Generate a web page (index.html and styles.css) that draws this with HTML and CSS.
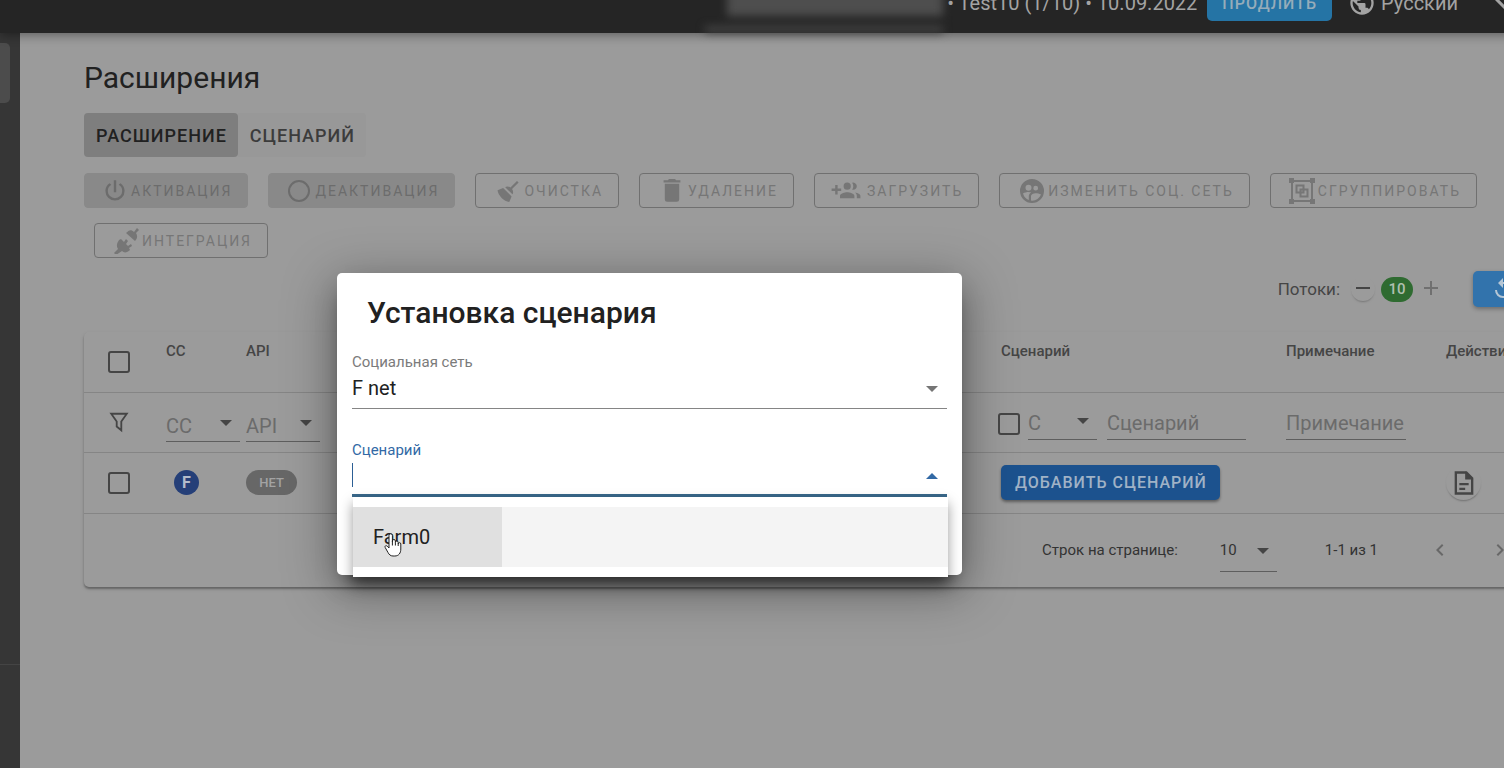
FILE: index.html
```html
<!DOCTYPE html>
<html lang="ru">

<head>
    <meta charset="utf-8">
    <title>Расширения</title>
    <link rel="stylesheet" href="styles.css">
</head>

<body>
    <header class="topbar">
        <div class="hidden-mail"></div>
        <span>• Test10 (1/10) • 10.09.2022</span>
        <button class="renew">ПРОДЛИТЬ</button>
        <svg class="globe" viewBox="0 0 24 24"><path d="M17.9 17.39c-.26-.8-1.01-1.39-1.9-1.39h-1v-3a1 1 0 0 0-1-1H8v-2h2a1 1 0 0 0 1-1V7h2a2 2 0 0 0 2-2v-.41c2.93 1.18 5 4.05 5 7.41 0 2.08-.8 3.97-2.1 5.39M11 19.93C7.05 19.44 4 16.08 4 12c0-.62.08-1.21.21-1.79L9 15v1a2 2 0 0 0 2 2m1-16A10 10 0 0 0 2 12a10 10 0 0 0 10 10 10 10 0 0 0 10-10A10 10 0 0 0 12 2z"/></svg>
        <span class="lang">Русский</span>
        <svg class="chevron" viewBox="0 0 24 24"><path d="M7.41 8.58 12 13.17l4.59-4.59L18 10l-6 6-6-6z"/></svg>
    </header>

    <div class="layout">
        <nav class="sidebar">
            <a href="#" class="active" aria-label="Расширения"></a>
            <div class="side-line"></div>
        </nav>

        <main>
            <h1>Расширения</h1>

            <div class="tabs">
                <button class="selected">РАСШИРЕНИЕ</button>
                <button>СЦЕНАРИЙ</button>
            </div>

            <div class="toolbar">
                <button class="tool filled" disabled>
                    <svg viewBox="2 2 20 20"><path d="m16.56 5.44-1.45 1.45A5.97 5.97 0 0 1 18 12a6 6 0 0 1-12 0c0-2.17 1.16-4.06 2.88-5.12L7.44 5.44A7.96 7.96 0 0 0 4 12a8 8 0 0 0 16 0c0-2.72-1.36-5.12-3.44-6.56M13 3h-2v10h2"/></svg>
                    АКТИВАЦИЯ
                </button>
                <button class="tool filled" disabled>
                    <svg viewBox="0 0 24 24"><circle cx="12" cy="12" r="10" class="stroke"/></svg>
                    ДЕАКТИВАЦИЯ
                </button>
                <button class="tool" disabled>
                    <svg viewBox="1 1 21 21"><path d="m19.36 2.72 1.42 1.42-5.72 5.71c1.07 1.54 1.22 3.39.32 4.59L9.06 8.12c1.2-.9 3.05-.75 4.59.32zM5.93 17.57c-2.01-2.01-3.24-4.41-3.58-6.65l4.88-2.09 7.44 7.44-2.09 4.88c-2.24-.34-4.64-1.57-6.65-3.58"/></svg>
                    ОЧИСТКА
                </button>
                <button class="tool" disabled>
                    <svg viewBox="2 2 20 20"><path d="M19 3h-3.5l-1-1h-5l-1 1H5v2h14M6 19a2 2 0 0 0 2 2h8a2 2 0 0 0 2-2V6H6z"/></svg>
                    УДАЛЕНИЕ
                </button>
                <button class="tool" disabled>
                    <svg class="wide" viewBox="0 0 24 20"><path d="M8 8H5V5H3v3H0v2h3v3h2v-3h3zm10 1a3 3 0 1 0-.9-5.86 5 5 0 0 1 0 5.72q.42.14.9.14m-5 0a3 3 0 1 0-3-3 3 3 0 0 0 3 3m6.6 2.2c.8.7 1.4 1.6 1.4 2.8v2h3v-2c0-1.5-2.4-2.5-4.4-2.8M13 11c-2 0-6 1-6 3v2h12v-2c0-2-4-3-6-3"/></svg>
                    ЗАГРУЗИТЬ
                </button>
                <button class="tool" disabled>
                    <svg viewBox="0 0 24 24"><path fill-rule="evenodd" d="M12 0a12 12 0 1 0 0 24 12 12 0 0 0 0-24M8.5 5.7a3 3 0 1 1 0 6 3 3 0 0 1 0-6m7.2 1.1a2.4 2.4 0 1 1 0 4.8 2.4 2.4 0 0 1 0-4.8M3 14.600c1.500-1 3.700-1.500 5.500-1.500.9 0 1.900.2 2.800.5-2 1.100-2.500 2.400-2.500 3.500v4a10 10 0 0 1-5.800-6.500m8 7v-4.500c0-1.800 2.400-2.900 4.700-2.900 1.500 0 3.900.5 5.300 1.400a10 10 0 0 1-10 6"/></svg>
                    ИЗМЕНИТЬ СОЦ. СЕТЬ
                </button>
                <button class="tool group" disabled>
                    <svg viewBox="0 0 26 26"><path class="stroke" d="M3 3h20v20H3zM7.500 7.500h7v7h-7zM11.500 11.500h7v7h-7z"/><path d="M0 0h5v5H0zM21 0h5v5h-5zM0 21h5v5H0zM21 21h5v5h-5z"/></svg>
                    СГРУППИРОВАТЬ
                </button>
                <button class="tool plug" disabled>
                    <svg viewBox="0 0 26 26"><path d="m21 4 3-4 2 2-3 3c2 3 1 6-1 8l-9-8c3-3 5-4 8-1M6 12l2-1 3 3 2-3 2 2-2 3 2 2 3-2 1 2-3 2 1 2c-3 3-6 3-8 1l-6 4-2-2 4-4c-2-3-1-6 1-9"/></svg>
                    ИНТЕГРАЦИЯ
                </button>
            </div>

            <div class="threads">
                <span class="threads-label">Потоки:</span>
                <button class="round" aria-label="Меньше"><svg viewBox="0 0 24 24"><path d="M19 12H5v-2h14z"/></svg></button>
                <span class="count">10</span>
                <button class="round plus" aria-label="Больше"><svg viewBox="0 0 24 24"><path d="M19 12h-6v6h-2v-6H5v-2h6V4h2v6h6z"/></svg></button>
                <button class="refresh" aria-label="Обновить"><svg viewBox="0 0 24 24"><path d="M12 5V1L7 6l5 5V7a6 6 0 1 1-6 6H4a8 8 0 1 0 8-8"/></svg></button>
            </div>

            <div class="card">
                <table>
                    <colgroup>
                        <col class="col-check">
                        <col class="col-small">
                        <col class="col-small">
                        <col>
                        <col class="col-scenario">
                        <col class="col-note">
                        <col class="col-action">
                    </colgroup>
                    <thead>
                        <tr>
                            <th class="check"><input type="checkbox" aria-label="Выбрать все"></th>
                            <th>CC</th>
                            <th>API</th>
                            <th></th>
                            <th>Сценарий</th>
                            <th>Примечание</th>
                            <th>Действия</th>
                        </tr>
                    </thead>
                    <tbody>
                        <tr class="filters">
                            <td class="check"><svg class="funnel" viewBox="0 0 24 24"><path d="M3.500 3h17L14.500 11.500V21l-5-4v-5.500z"/></svg></td>
                            <td><div class="select"><select aria-label="CC"><option>CC</option></select></div></td>
                            <td><div class="select"><select aria-label="API"><option>API</option></select></div></td>
                            <td></td>
                            <td>
                                <div class="scenario-filter">
                                    <input type="checkbox" aria-label="Сценарий">
                                    <div class="select"><select aria-label="Статус"><option>С</option></select></div>
                                    <input type="text" placeholder="Сценарий" aria-label="Фильтр сценария">
                                </div>
                            </td>
                            <td><input type="text" class="note" placeholder="Примечание" aria-label="Примечание"></td>
                            <td></td>
                        </tr>
                        <tr class="row">
                            <td class="check"><input type="checkbox" aria-label="Выбрать строку"></td>
                            <td><span class="net">F</span></td>
                            <td><span class="chip">НЕТ</span></td>
                            <td></td>
                            <td><button class="add">ДОБАВИТЬ СЦЕНАРИЙ</button></td>
                            <td></td>
                            <td><button class="doc" aria-label="Журнал"><svg viewBox="0 0 24 24"><path class="stroke" d="M5 3h9l5 5v13H5z"/><path d="M13 2v7h7zM8 12h8v2H8zM8 16h5v2H8z"/></svg></button></td>
                        </tr>
                    </tbody>
                </table>
                <div class="pager">
                    <label for="rows">Строк на странице:</label>
                    <div class="select"><select id="rows"><option>10</option></select></div>
                    <span class="range">1-1 из 1</span>
                    <button class="page" aria-label="Назад"><svg viewBox="0 0 24 24"><path d="M15.41 16.58 10.83 12l4.58-4.59L14 6l-6 6 6 6z"/></svg></button>
                    <button class="page" aria-label="Вперёд"><svg viewBox="0 0 24 24"><path d="M8.59 16.58 13.170 12 8.590 7.410 10 6l6 6-6 6z"/></svg></button>
                </div>
            </div>
        </main>
    </div>

    <div class="dialog" role="dialog" aria-labelledby="dialog-title">
        <h2 id="dialog-title">Установка сценария</h2>
        <div class="field">
            <label for="network">Социальная сеть</label>
            <div class="select"><select id="network"><option>F net</option></select></div>
        </div>
        <div class="field open">
            <label for="scenario">Сценарий</label>
            <div class="select">
                <span class="caret"></span>
                <input type="text" id="scenario" role="combobox" aria-expanded="true">
            </div>
            <div class="menu" role="listbox">
                <button class="option" role="option">Farm0</button>
                <svg class="hand" viewBox="0 0 18 24"><path d="M5 2.500a1.700 1.700 0 0 1 3.400 0V9V8a1.500 1.500 0 0 1 3 0v1.500a1.400 1.400 0 0 1 2.800 0V11a1.300 1.300 0 0 1 2.600 0v5c0 4-2 7-6 7H9c-2.500 0-4-1.500-5-3.500L1.200 14.500c-.8-1.500 1-2.500 2-1.300L5 15z"/><path d="M8.400 9v3.500M11.400 9.500v3M14.200 11v2"/></svg>
            </div>
        </div>
    </div>
</body>

</html>
```
FILE: styles.css
```css
* {
    box-sizing: border-box;
}

body {
    margin: 0;
    min-height: 100vh;
    overflow: hidden;
    position: relative;
    display: flex;
    flex-direction: column;
    background: #9b9b9b;
    color: #212121;
    font-family: Roboto, "Liberation Sans", sans-serif;
    font-size: 15px;
}

button,
input,
select {
    font-family: inherit;
    font-size: inherit;
    color: inherit;
    background: none;
    border: none;
    border-radius: 0;
    padding: 0;
    margin: 0;
    outline: none;
}

svg {
    display: block;
    flex: none;
    width: 24px;
    height: 24px;
    fill: currentColor;
}

.stroke {
    fill: none;
    stroke: currentColor;
    stroke-width: 2;
}

/* top bar */
.topbar {
    position: relative;
    z-index: 1;
    height: 60px;
    margin: -27px -18px 0 0;
    display: flex;
    align-items: center;
    justify-content: flex-end;
    background: #252525;
    color: #a3a3a3;
    font-size: 20px;
    box-shadow: 0 2px 10px rgba(0, 0, 0, 0.4);
}

.hidden-mail {
    position: relative;
    width: 216px;
    height: 26px;
    margin-right: 4px;
    background: #4e4e4e;
    filter: blur(4px);
}

.hidden-mail::after {
    content: "";
    position: absolute;
    left: -22px;
    right: 0;
    top: 36px;
    height: 7px;
    background: #434343;
}

.renew {
    height: 35px;
    padding: 0 15px;
    margin: 0 16px 0 10px;
    border-radius: 5px;
    background: #2574a5;
    color: #96acba;
    font-size: 16px;
    font-weight: 500;
    letter-spacing: 1px;
}

.globe {
    width: 28px;
    height: 28px;
}

.lang {
    margin: 0 28px 0 5px;
}

.chevron {
    width: 36px;
    height: 36px;
}

/* side menu */
.layout {
    flex: 1;
    display: flex;
}

.sidebar {
    width: 20px;
    padding-top: 10px;
    background: #363636;
}

.sidebar .active {
    display: block;
    width: 10px;
    height: 60px;
    border-radius: 0 5px 5px 0;
    background: #4c4c4c;
}

.side-line {
    margin-top: 561px;
    border-top: 1px solid #444;
}

main {
    flex: 1;
    min-width: 0;
    padding: 27px 0 0 64px;
    margin-right: -60px;
}

h1 {
    margin: 0 0 18px;
    font-size: 30px;
    font-weight: 400;
    line-height: 35px;
}

.tabs {
    display: flex;
    margin-bottom: 16px;
}

.tabs button {
    height: 44px;
    padding: 0 11px 0 12px;
    border-radius: 0 4px 4px 0;
    background: #989898;
    color: #3c3c3c;
    font-size: 18px;
    font-weight: 500;
    letter-spacing: 1px;
}

.tabs .selected {
    border-radius: 4px;
    background: #7e7e7e;
    color: #212121;
}

.toolbar {
    display: flex;
    flex-wrap: wrap;
    gap: 15px 20px;
    margin-right: 60px;
    margin-bottom: 13px;
}

.tool {
    display: flex;
    align-items: center;
    gap: 4px;
    height: 35px;
    padding: 0 15px 0 20px;
    border: 1px solid #707070;
    border-radius: 4px;
    color: #767676;
    font-size: 14px;
    letter-spacing: 2px;
}

.tool.filled {
    padding-left: 18px;
    border-color: #898989;
    background: #898989;
    color: #6c6c6c;
}

.tool .wide {
    width: 30px;
    margin-left: -4px;
    margin-right: 2px;
}

.tool.group,
.tool.plug {
    gap: 3px;
    padding-left: 18px;
}

.tool.group svg,
.tool.plug svg {
    width: 26px;
    height: 26px;
}

.tool.plug {
    margin-left: 10px;
}

/* threads counter */
.threads {
    display: flex;
    align-items: center;
    justify-content: flex-end;
    gap: 6px;
    height: 36px;
    margin-bottom: 25px;
    color: #454545;
    font-size: 17px;
}

.threads-label {
    margin-right: 5px;
}

.round {
    width: 24px;
    height: 24px;
    border-radius: 50%;
    box-shadow: 0 2px 2px -1px #777;
}

.round svg {
    width: 24px;
    height: 24px;
}

.round.plus {
    box-shadow: none;
    color: #707070;
}

.count {
    width: 32px;
    line-height: 25px;
    border-radius: 13px;
    background: #2f6b31;
    color: #b0c0b0;
    font-size: 15px;
    font-weight: 500;
    text-align: center;
}

.refresh {
    width: 91px;
    height: 36px;
    padding-left: 18px;
    margin-left: 24px;
    border-radius: 5px;
    background: #3273ac;
    color: #b5c6d5;
    box-shadow: 0 2px 4px rgba(0, 0, 0, 0.3);
}

/* table */
.card {
    border-radius: 5px;
    box-shadow: 0 2px 2px rgba(0, 0, 0, 0.3), 0 2px 5px rgba(0, 0, 0, 0.08);
}

table {
    width: 100%;
    table-layout: fixed;
    border-collapse: collapse;
}

.col-check {
    width: 62px;
}

.col-small {
    width: 80px;
}

.col-scenario {
    width: 285px;
}

.col-note {
    width: 160px;
}

.col-action {
    width: 138px;
}

th,
td {
    height: 60px;
    padding: 0 0 0 20px;
    border-bottom: 1px solid #858585;
    text-align: left;
}

.row td {
    height: 61px;
}

th {
    padding-top: 10px;
    vertical-align: top;
    color: #454545;
    font-size: 15px;
    font-weight: 500;
}

th.check,
td.check {
    padding: 0 0 0 24px;
    vertical-align: middle;
}

input[type="checkbox"] {
    appearance: none;
    display: block;
    flex: none;
    width: 22px;
    height: 22px;
    border: 2px solid #454545;
    border-radius: 3px;
}

.funnel {
    fill: none;
    stroke: #454545;
    stroke-width: 2;
    width: 22px;
    height: 26px;
}

.select {
    position: relative;
    border-bottom: 1px solid #5e5e5e;
}

.select::after {
    content: "";
    position: absolute;
    right: 8px;
    top: 50%;
    margin-top: -5px;
    border: 6px solid transparent;
    border-top-color: #454545;
    border-bottom: none;
    pointer-events: none;
}

.select select {
    appearance: none;
    display: block;
    width: 100%;
    height: 32px;
}

td .select {
    width: 74px;
    margin-top: 6px;
}

td .select select {
    padding-top: 2px;
}

.filters {
    color: #6b6b6b;
    font-size: 20px;
}

.filters input[type="text"] {
    height: 32px;
    border-bottom: 1px solid #5e5e5e;
}

.filters ::placeholder {
    color: #6b6b6b;
}

.scenario-filter {
    display: flex;
    align-items: center;
    margin-left: -3px;
    margin-top: 3px;
}

.scenario-filter .select {
    width: 69px;
    margin: 0 10px 0 8px;
}

.scenario-filter .select select {
    height: 31px;
    padding-top: 0;
}

.scenario-filter input[type="text"] {
    width: 139px;
}

.filters .note {
    width: 120px;
    margin-top: 3px;
}

.net {
    display: block;
    width: 25px;
    margin-left: 8px;
    border-radius: 50%;
    background: #253f78;
    color: #b4bccb;
    font-size: 16px;
    font-weight: 700;
    line-height: 25px;
    text-align: center;
}

.chip {
    display: block;
    width: 51px;
    border-radius: 13px;
    background: #676767;
    color: #a3a3a3;
    font-size: 13px;
    font-weight: 500;
    line-height: 25px;
    text-align: center;
}

.add {
    height: 35px;
    padding: 0 13px 0 14px;
    border-radius: 5px;
    background: #1c528e;
    color: #a0b2c6;
    font-size: 16px;
    font-weight: 500;
    letter-spacing: 1px;
    box-shadow: 0 2px 3px rgba(0, 0, 0, 0.4);
}

.doc {
    display: flex;
    align-items: center;
    justify-content: center;
    width: 35px;
    height: 35px;
    border-radius: 50%;
    color: #454545;
    box-shadow: 0 2px 2px -1px #707070;
}

.doc svg {
    width: 28px;
    height: 28px;
}

.pager {
    display: flex;
    align-items: center;
    justify-content: flex-end;
    height: 73px;
    padding-right: 44px;
    color: #333;
}

.pager .select {
    width: 57px;
    margin: 0 48px 0 42px;
}

.pager .select::after {
    margin-top: -2px;
}

.pager .select select {
    height: 42px;
}

.range {
    margin-right: 42px;
}

.page {
    width: 40px;
    height: 40px;
    padding: 0 8px;
    color: #686868;
}

.page + .page {
    margin-left: 20px;
}

/* dialog */
.dialog {
    position: absolute;
    z-index: 2;
    top: 273px;
    left: 337px;
    width: 625px;
    height: 302px;
    padding: 22px 15px 0;
    border-radius: 5px;
    background: #fff;
    box-shadow: 0 14px 20px -8px rgba(0, 0, 0, 0.5), 0 12px 50px 4px rgba(0, 0, 0, 0.35);
}

.dialog h2 {
    margin: 0 0 22px 15px;
    font-size: 30px;
    font-weight: 500;
    line-height: 36px;
}

.field {
    position: relative;
    margin-bottom: 32px;
    font-size: 20px;
}

.field label {
    display: block;
    color: #7b7b7b;
    font-size: 15px;
    line-height: 18px;
}

.field .select {
    border-bottom-color: #858585;
}

.field .select select {
    height: 37px;
    padding-bottom: 4px;
}

.field .select input {
    display: block;
    width: 100%;
    height: 35px;
}

.field .select::after {
    right: 9px;
    margin-top: -4px;
    border-top-color: #757575;
}

.field.open label {
    color: #3269a5;
}

.field.open .select {
    border-bottom: 3px solid #39688a;
}

.field.open .select::after {
    border: 6px solid transparent;
    border-top: none;
    border-bottom-color: #3269a5;
}

.caret {
    position: absolute;
    left: 0;
    top: 4px;
    height: 24px;
    border-left: 1px solid #2c5f95;
}

.menu {
    position: absolute;
    top: 100%;
    left: 1px;
    right: -1px;
    padding: 10px 0;
    background: #fff;
    box-shadow: 0 6px 12px rgba(0, 0, 0, 0.4);
}

.option {
    display: block;
    width: 100%;
    height: 60px;
    padding-left: 20px;
    background: linear-gradient(to right, #e0e0e0 149px, #f4f4f4 149px);
    text-align: left;
}

.hand {
    position: absolute;
    left: 31px;
    top: 36px;
    width: 18px;
    height: 24px;
    fill: #fff;
    stroke: #222;
}
```
